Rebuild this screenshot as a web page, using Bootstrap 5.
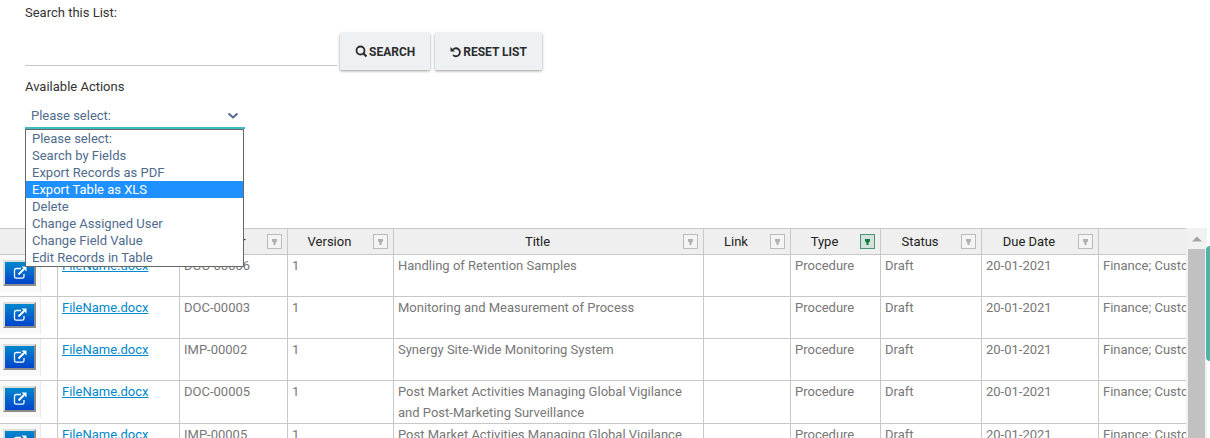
<!DOCTYPE html>
<html lang="en">
<head>
<meta charset="utf-8">
<meta name="viewport" content="width=device-width, initial-scale=1">
<title>Records</title>
<link href="https://cdn.jsdelivr.net/npm/bootstrap@5.3.0/dist/css/bootstrap.min.css" rel="stylesheet">
<style>
  body { font: 13px/20px Roboto, "Liberation Sans", sans-serif; color: #333; background: #fff; }
  .tools { padding: 3px 25px 0; height: 228px; }
  .search-line { margin-top: 10px; gap: 3px; }
  .search-box { width: 312px; height: 33px; border: 0; border-bottom: 1px solid #c2c8d0; border-radius: 0; padding: 0 6px; background: none; }
  .tool-btns { gap: 5px; }
  .tool-btn { height: 37px; padding: 0 15px; gap: 1px; border: 0; border-radius: 1px; background: #eef1f4; color: #2c2c2c; font-size: 12px; font-weight: 700; line-height: 20px; box-shadow: 0 1px 3px rgba(0,0,0,.4); }
  .actions-label { margin-top: 7px; }
  .picker { width: 220px; }
  .picker select { height: 32px; padding: 8px 6px 0; border: 0; border-bottom: 2px solid #3cbcc6; border-radius: 0; color: #4f6b8c; font-size: 13px; line-height: 20px; appearance: none; background: none; box-shadow: none; }
  .picker .caret { right: 6px; top: 14px; }
  .picker .choices { top: 100%; left: 0; width: 219px; border: 1px solid #666; background: #fff; color: #4f6b8c; line-height: 17px; z-index: 5; }
  .choices li { padding: 0 6px; }
  .choices li.on { background: #1e90ff; color: #fff; }

  .grid { table-layout: fixed; width: 1500px; border-collapse: separate; border-spacing: 0; color: #777; }
  .grid th, .grid td { border-right: 1px solid #c8c8c8; border-bottom: 1px solid #c8c8c8; }
  .grid th { height: 27px; border-top: 1px solid #c8c8c8; background: #efefef; color: #222; font-weight: 400; padding: 0 5px 0 0; }
  .grid th span { padding-right: 2px; }
  .grid td { height: 42px; padding: 0 4px; line-height: 21px; vertical-align: top; }
  .grid td.tight { padding: 0; }
  .grid a { color: #08c; }
  .opener { width: 41px; height: 37px; padding: 5px 0 0 3px; background: #f9f9f9; border-right: 1px solid #e8eaec; }
  .open-btn { width: 33px; height: 26px; padding: 0; border: 2px solid; border-color: #ddd #8c8c8c #8c8c8c #ddd; background: linear-gradient(#08c, #04c); color: #fff; }
  .filter { width: 15px; height: 15px; padding: 0; border: 1px solid #bbb; background: #f4f4f4; color: #b0b0b0; }
  .filter.on { border-color: #4c9474; background: #d3e2da; color: #107c41; }
  .c-open { width: 58px; } .c-file { width: 122px; } .c-num { width: 108px; } .c-ver { width: 106px; }
  .c-title { width: 310px; } .c-link { width: 87px; } .c-type { width: 90px; } .c-status { width: 101px; } .c-due { width: 117px; }
  .pane { padding-right: 3px; }
  .bar { width: 21px; background: #f1f1f1; padding: 0 2px; }
  .bar button { height: 21px; border: 0; background: none; padding: 0; }
  .thumb { background: #c1c1c1; }
  .side-tab { right: 0; top: 246px; width: 4px; height: 115px; border: 0; padding: 0; background: #4fb3a5; border-radius: 4px 0 0 4px; }
  svg { display: block; }
</style>
<script src="https://cdn.jsdelivr.net/npm/bootstrap@5.3.0/dist/js/bootstrap.bundle.min.js"></script>
</head>
<body>
<svg class="d-none" aria-hidden="true">
  <symbol id="ext" viewBox="0 0 14 14"><path d="M8 2.5H3.2Q1.5 2.5 1.5 4.200V10.500Q1.500 12.200 3.200 12.200H9.300Q11 12.200 11 10.500V8" fill="none" stroke="currentColor" stroke-width="1.300"/><path d="M5.500 8.500L11 3" stroke="currentColor" stroke-width="2"/><path d="M8.500 .5H13.500V5.500Z" fill="currentColor"/></symbol>
  <symbol id="fil" viewBox="0 0 7 8"><path d="M1 1H6V3L4.500 5V7H2.500V5L1 3Z" fill="currentColor"/></symbol>
</svg>
<div class="d-flex flex-column vh-100 overflow-hidden position-relative">
  <form class="tools flex-shrink-0">
    <label for="q" class="d-block">Search this List:</label>
    <div class="search-line d-flex align-items-start">
      <input id="q" type="text" class="search-box">
      <div class="tool-btns d-flex">
        <button type="button" class="tool-btn d-flex align-items-center"><svg width="13" height="13" viewBox="0 0 13 13" fill="none" stroke="currentColor"><circle cx="5.500" cy="5.500" r="4" stroke-width="1.800"/><path d="M8.500 8.500L11.500 11.500" stroke-width="2.200"/></svg>SEARCH</button>
        <button type="button" class="tool-btn d-flex align-items-center"><svg width="12" height="12" viewBox="0 0 12 12"><path d="M3 3.500A4 4 0 1 1 3 9" fill="none" stroke="currentColor" stroke-width="1.800"/><path d="M.5 1V5.500H5Z" fill="currentColor"/></svg>RESET LIST</button>
      </div>
    </div>
    <label for="act" class="actions-label d-block">Available Actions</label>
    <div class="picker position-relative">
      <select id="act" class="w-100 d-block"><option>Please select:</option><option>Search by Fields</option><option>Export Records as PDF</option><option>Export Table as XLS</option><option>Delete</option><option>Change Assigned User</option><option>Change Field Value</option><option>Edit Records in Table</option></select>
      <svg class="caret position-absolute pe-none" width="12" height="10" viewBox="0 0 12 10"><path d="M1.500 2.500L6 6.500L10.500 2.500" fill="none" stroke="#4f6b8c" stroke-width="2"/></svg>
      <ul class="choices position-absolute list-unstyled m-0" role="listbox" aria-label="Available Actions">
        <li role="option">Please select:</li>
        <li role="option">Search by Fields</li>
        <li role="option">Export Records as PDF</li>
        <li role="option" class="on" aria-selected="true">Export Table as XLS</li>
        <li role="option">Delete</li>
        <li role="option">Change Assigned User</li>
        <li role="option">Change Field Value</li>
        <li role="option">Edit Records in Table</li>
      </ul>
    </div>
  </form>
  <div class="pane d-flex flex-grow-1 overflow-hidden">
    <div class="flex-grow-1 overflow-hidden">
      <table class="grid">
        <colgroup><col class="c-open"><col class="c-file"><col class="c-num"><col class="c-ver"><col class="c-title"><col class="c-link"><col class="c-type"><col class="c-status"><col class="c-due"><col></colgroup>
        <thead><tr>
          <th></th><th></th>
          <th><div class="d-flex align-items-center"><span class="flex-grow-1 text-center">Number</span><button class="filter" aria-label="Filter number"><svg class="mx-auto" width="7" height="8"><use href="#fil"/></svg></button></div></th>
          <th><div class="d-flex align-items-center"><span class="flex-grow-1 text-center">Version</span><button class="filter" aria-label="Filter version"><svg class="mx-auto" width="7" height="8"><use href="#fil"/></svg></button></div></th>
          <th><div class="d-flex align-items-center"><span class="flex-grow-1 text-center">Title</span><button class="filter" aria-label="Filter title"><svg class="mx-auto" width="7" height="8"><use href="#fil"/></svg></button></div></th>
          <th><div class="d-flex align-items-center"><span class="flex-grow-1 text-center">Link</span><button class="filter" aria-label="Filter link"><svg class="mx-auto" width="7" height="8"><use href="#fil"/></svg></button></div></th>
          <th><div class="d-flex align-items-center"><span class="flex-grow-1 text-center">Type</span><button class="filter on" aria-label="Filter type"><svg class="mx-auto" width="7" height="8"><use href="#fil"/></svg></button></div></th>
          <th><div class="d-flex align-items-center"><span class="flex-grow-1 text-center">Status</span><button class="filter" aria-label="Filter status"><svg class="mx-auto" width="7" height="8"><use href="#fil"/></svg></button></div></th>
          <th><div class="d-flex align-items-center"><span class="flex-grow-1 text-center">Due Date</span><button class="filter" aria-label="Filter due date"><svg class="mx-auto" width="7" height="8"><use href="#fil"/></svg></button></div></th>
          <th></th>
        </tr></thead>
        <tbody>
          <tr><td class="tight"><div class="opener"><button class="open-btn" aria-label="Open record"><svg class="mx-auto" width="14" height="14"><use href="#ext"/></svg></button></div></td><td><a href="#">FileName.docx</a></td><td>DOC-00006</td><td>1</td><td>Handling of Retention Samples</td><td></td><td>Procedure</td><td>Draft</td><td>20-01-2021</td><td>Finance; Customer</td></tr>
          <tr><td class="tight"><div class="opener"><button class="open-btn" aria-label="Open record"><svg class="mx-auto" width="14" height="14"><use href="#ext"/></svg></button></div></td><td><a href="#">FileName.docx</a></td><td>DOC-00003</td><td>1</td><td>Monitoring and Measurement of Process</td><td></td><td>Procedure</td><td>Draft</td><td>20-01-2021</td><td>Finance; Customer</td></tr>
          <tr><td class="tight"><div class="opener"><button class="open-btn" aria-label="Open record"><svg class="mx-auto" width="14" height="14"><use href="#ext"/></svg></button></div></td><td><a href="#">FileName.docx</a></td><td>IMP-00002</td><td>1</td><td>Synergy Site-Wide Monitoring System</td><td></td><td>Procedure</td><td>Draft</td><td>20-01-2021</td><td>Finance; Customer</td></tr>
          <tr><td class="tight"><div class="opener"><button class="open-btn" aria-label="Open record"><svg class="mx-auto" width="14" height="14"><use href="#ext"/></svg></button></div></td><td><a href="#">FileName.docx</a></td><td>DOC-00005</td><td>1</td><td>Post Market Activities Managing Global Vigilance and Post-Marketing Surveillance</td><td></td><td>Procedure</td><td>Draft</td><td>20-01-2021</td><td>Finance; Customer</td></tr>
          <tr><td class="tight"><div class="opener"><button class="open-btn" aria-label="Open record"><svg class="mx-auto" width="14" height="14"><use href="#ext"/></svg></button></div></td><td><a href="#">FileName.docx</a></td><td>IMP-00005</td><td>1</td><td>Post Market Activities Managing Global Vigilance and Post-Marketing Surveillance</td><td></td><td>Procedure</td><td>Draft</td><td>20-01-2021</td><td>Finance; Customer</td></tr>
        </tbody>
      </table>
    </div>
    <div class="bar flex-shrink-0 d-flex flex-column">
      <button type="button" aria-label="Scroll up"><svg class="mx-auto" width="10" height="6" viewBox="0 0 10 6"><path d="M0 5.500L5 .5L10 5.500Z" fill="#a3a3a3"/></svg></button>
      <div class="thumb flex-grow-1"></div>
    </div>
  </div>
  <button type="button" class="side-tab position-absolute" aria-label="Open side panel"></button>
</div>
</body>
</html>
